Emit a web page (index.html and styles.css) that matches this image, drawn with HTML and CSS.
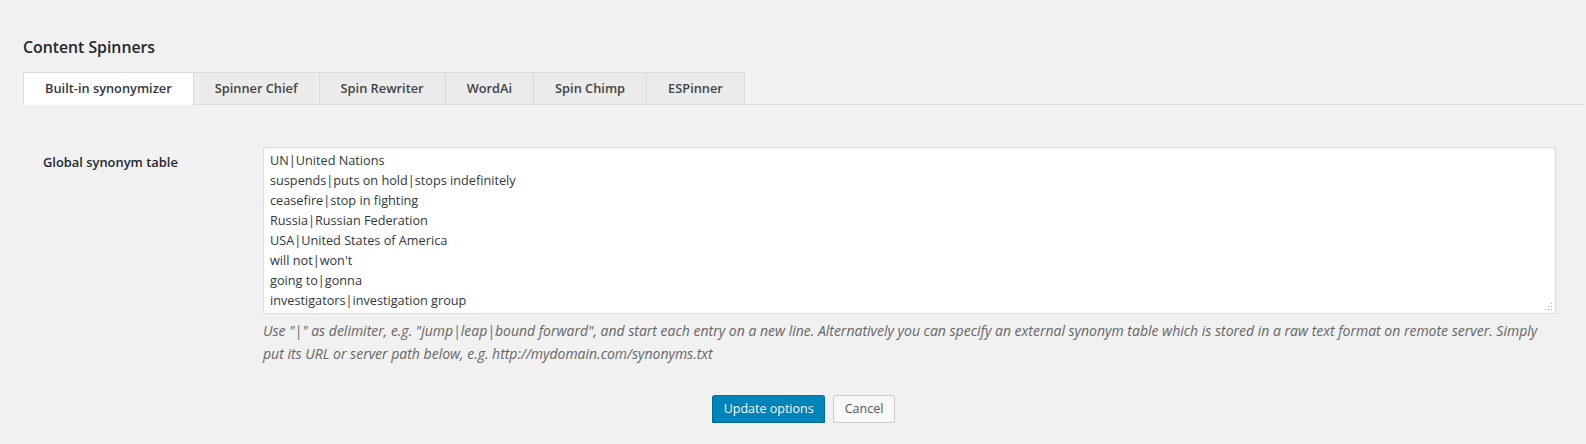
FILE: index.html
```html
<!DOCTYPE html>
<html lang="en">

<head>
    <meta charset="UTF-8">
    <meta name="viewport" content="width=device-width, initial-scale=1.0">
    <title>Content Spinners</title>
    <link rel="stylesheet" href="styles.css">
</head>

<body>
    <div class="wrap">
        <h2>Content Spinners</h2>

        <nav class="nav-tabs">
            <a href="#" class="nav-tab active">Built-in synonymizer</a>
            <a href="#" class="nav-tab">Spinner Chief</a>
            <a href="#" class="nav-tab">Spin Rewriter</a>
            <a href="#" class="nav-tab">WordAi</a>
            <a href="#" class="nav-tab">Spin Chimp</a>
            <a href="#" class="nav-tab">ESPinner</a>
        </nav>

        <form class="options" action="#">
            <div class="form-row">
                <label for="synonyms">Global synonym table</label>
                <div class="field">
                    <div class="textarea-box">
                        <textarea id="synonyms" name="synonyms">UN|United Nations
suspends|puts on hold|stops indefinitely
ceasefire|stop in fighting
Russia|Russian Federation
USA|United States of America
will not|won't
going to|gonna
investigators|investigation group</textarea>
                        <span class="grip"></span>
                    </div>
                    <p class="description">Use "|" as delimiter, e.g. "jump|leap|bound forward", and start each entry on a new line. Alternatively you can specify an external synonym table which is stored in a raw text format on remote server. Simply put its URL or server path below, e.g. http://mydomain.com/synonyms.txt</p>
                </div>
            </div>

            <div class="actions">
                <button type="submit" class="button button-primary">Update options</button>
                <button type="button" class="button">Cancel</button>
            </div>
        </form>
    </div>
</body>

</html>
```
FILE: styles.css
```css
body {
    margin: 0;
    background: #f1f1f1;
    font-family: "Open Sans", sans-serif;
    color: #23282d;
}

.wrap {
    margin: 0 2px 0 23px;
    padding-top: 36px;
}

.wrap h2 {
    margin: 0 0 14px;
    font-size: 15.8px;
    line-height: 22px;
    font-weight: 600;
}

.nav-tabs {
    display: flex;
    border-bottom: 1px solid #dcdcdc;
}

.nav-tab {
    margin: 0 0 -1px -1px;
    padding: 3px 21px 4px;
    border: 1px solid #dcdcdc;
    background: #ebebeb;
    font-size: 12.8px;
    font-weight: 600;
    line-height: 24px;
    color: #444;
    text-decoration: none;
}

.nav-tab:first-child {
    margin-left: 0;
}

.nav-tab.active {
    background: #fff;
    border-bottom-color: #fff;
    color: #32373c;
}

.form-row {
    display: grid;
    grid-template-columns: 240px 1fr;
    margin-top: 42px;
    padding-right: 28px;
}

.form-row label {
    padding: 5px 0 0 20px;
    font-size: 12.9px;
    line-height: 20px;
    font-weight: 600;
}

.textarea-box {
    position: relative;
}

.textarea-box textarea {
    display: block;
    box-sizing: border-box;
    width: 100%;
    height: 167px;
    margin: 0;
    padding: 2px 6px 3px;
    border: 1px solid #ddd;
    box-shadow: inset 0 1px 2px rgba(0, 0, 0, .07);
    background: #fff;
    font-family: "Open Sans", sans-serif;
    font-size: 12.7px;
    line-height: 20px;
    color: #32373c;
    resize: none;
}

/* dotted resize corner */
.grip {
    position: absolute;
    right: 4px;
    bottom: 4px;
    width: 1px;
    height: 1px;
    background: #aaa;
    box-shadow: -3px 0 #aaa, -6px 0 #aaa, 0 -3px #aaa, -3px -3px #aaa, 0 -6px #aaa;
}

.description {
    margin: 5px 0 0;
    font-size: 14px;
    line-height: 23px;
    font-style: italic;
    color: #666;
}

.actions {
    display: flex;
    justify-content: center;
    gap: 8px;
    margin-top: 30px;
}

.button {
    box-sizing: border-box;
    height: 28px;
    padding: 0 10.5px 1px;
    border: 1px solid #ccc;
    border-radius: 3px;
    box-shadow: 0 1px 0 #ccc;
    background: #f7f7f7;
    font-family: "Open Sans", sans-serif;
    font-size: 12.5px;
    line-height: 26px;
    color: #555;
}

.button-primary {
    border-color: #0073aa #006799 #006799;
    box-shadow: 0 1px 0 #006799;
    background: #0085ba;
    color: #fff;
    text-shadow: 0 -1px 1px #006799;
}
```
